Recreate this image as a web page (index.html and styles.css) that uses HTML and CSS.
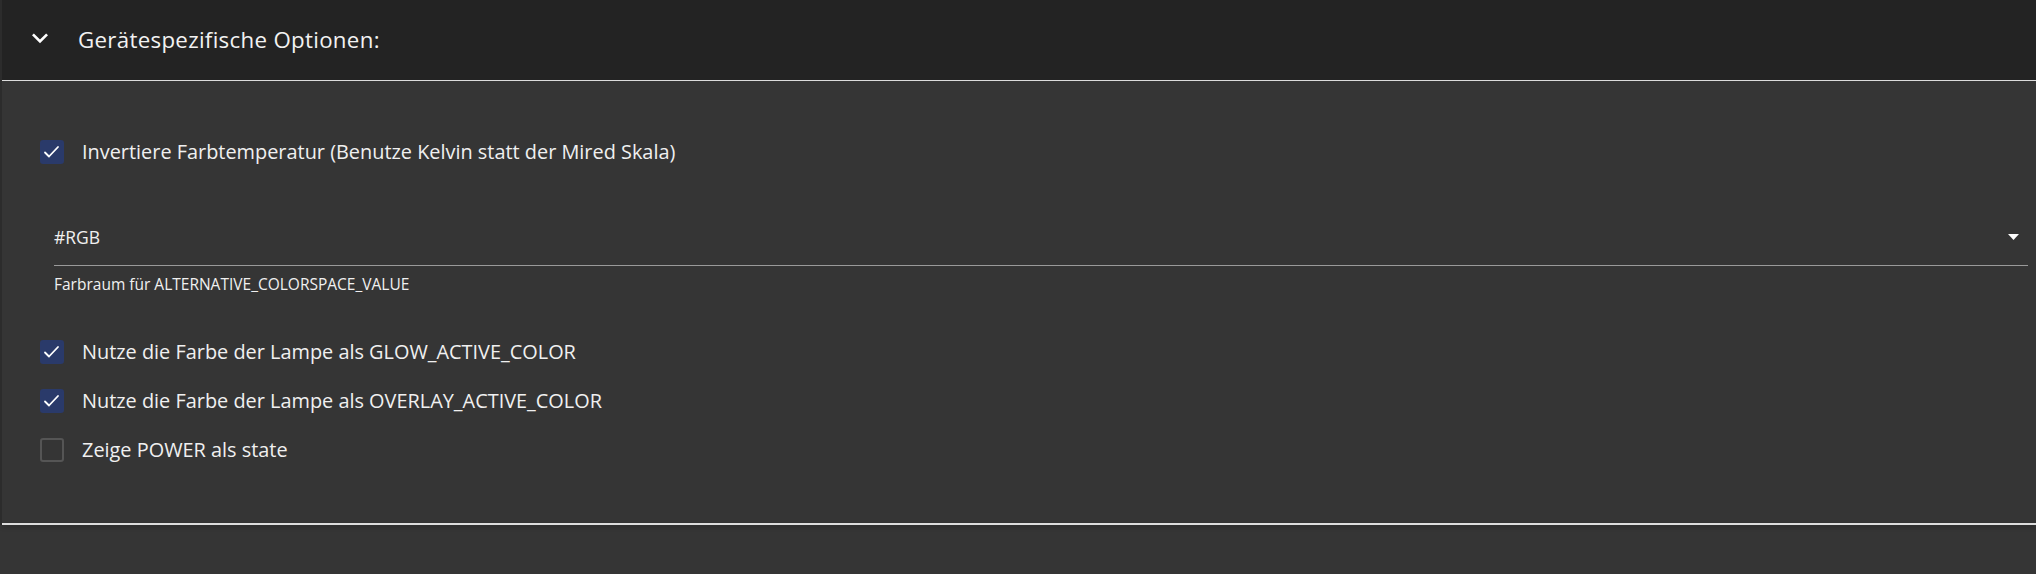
FILE: index.html
```html
<!DOCTYPE html>
<html lang="de">
<head>
<meta charset="utf-8">
<link rel="stylesheet" href="styles.css">
</head>
<body>
<div class="panel">
  <div class="header">
    <svg class="chevron" width="32" height="32" viewBox="0 0 24 24"><path d="M16.59 8.59L12 13.17 7.41 8.59 6 10l6 6 6-6z" fill="#fff"/></svg>
    <span class="title">Gerätespezifische Optionen:</span>
  </div>
  <div class="content">
    <label class="row first">
      <span class="box checked"><svg width="24" height="24" viewBox="0 0 24 24"><path d="M5 12.5l4 4 9-9.5" fill="none" stroke="#fff" stroke-width="1.8" stroke-linecap="round" stroke-linejoin="round"/></svg></span>
      <span class="label">Invertiere Farbtemperatur (Benutze Kelvin statt der Mired Skala)</span>
    </label>
    <div class="select">
      <div class="select-field">
        <span class="select-value">#RGB</span>
        <svg class="arrow" width="11" height="6" viewBox="0 0 11 6"><path d="M0 0h11L5.5 6z" fill="#fff"/></svg>
      </div>
      <div class="helper">Farbraum für ALTERNATIVE_COLORSPACE_VALUE</div>
    </div>
    <label class="row">
      <span class="box checked"><svg width="24" height="24" viewBox="0 0 24 24"><path d="M5 12.5l4 4 9-9.5" fill="none" stroke="#fff" stroke-width="1.8" stroke-linecap="round" stroke-linejoin="round"/></svg></span>
      <span class="label">Nutze die Farbe der Lampe als GLOW_ACTIVE_COLOR</span>
    </label>
    <label class="row">
      <span class="box checked"><svg width="24" height="24" viewBox="0 0 24 24"><path d="M5 12.5l4 4 9-9.5" fill="none" stroke="#fff" stroke-width="1.8" stroke-linecap="round" stroke-linejoin="round"/></svg></span>
      <span class="label">Nutze die Farbe der Lampe als OVERLAY_ACTIVE_COLOR</span>
    </label>
    <label class="row">
      <span class="box"></span>
      <span class="label">Zeige POWER als state</span>
    </label>
  </div>
  <div class="footer-line"></div>
</div>
</body>
</html>
```
FILE: styles.css
```css
* { box-sizing: border-box; }
html, body {
  margin: 0;
  padding: 0;
  background: #353535;
  height: 574px;
  overflow: hidden;
}
body {
  font-family: "Open Sans", "Noto Sans", sans-serif;
  color: #f0f0f0;
}
.panel {
  border-left: 2px solid #2c2c2c;
}
.header {
  height: 81px;
  background: #232323;
  border-bottom: 1px solid #dcdcdc;
  display: flex;
  align-items: center;
  padding-left: 22px;
}
.chevron {
  margin-top: -4px;
}
.title {
  margin-left: 22px;
  font-size: 22.3px;
  letter-spacing: 0.3px;
  color: #f2f2f2;
  margin-top: -2px;
}
.content {
  padding: 46px 0 0 38px;
  height: 442px;
}
.row {
  display: flex;
  align-items: center;
  height: 49px;
}
.box {
  width: 24px;
  height: 24px;
  border-radius: 3px;
  border: 2px solid #555;
  flex: none;
  display: flex;
  align-items: center;
  justify-content: center;
}
.box.checked {
  background: #2a3a6a;
  border-color: #2a3a6a;
}
.box svg { flex: none; margin: -2px; }
.label {
  margin-left: 18px;
  font-size: 19.9px;
  margin-top: -1px;
}
.select {
  margin: 41px 8px 32px 14px;
}
.select-field {
  display: flex;
  align-items: center;
  justify-content: space-between;
  height: 49px;
  border-bottom: 1px solid #9a9a9a;
  padding-right: 9px;
  padding-bottom: 8px;
}
.select-value {
  font-size: 17.5px;
}
.helper {
  font-size: 15.5px;
  margin-top: 7px;
}
.footer-line {
  height: 2px;
  background: #dcdcdc;
  box-shadow: 0 2px 4px rgba(0,0,0,0.35);
}
```
